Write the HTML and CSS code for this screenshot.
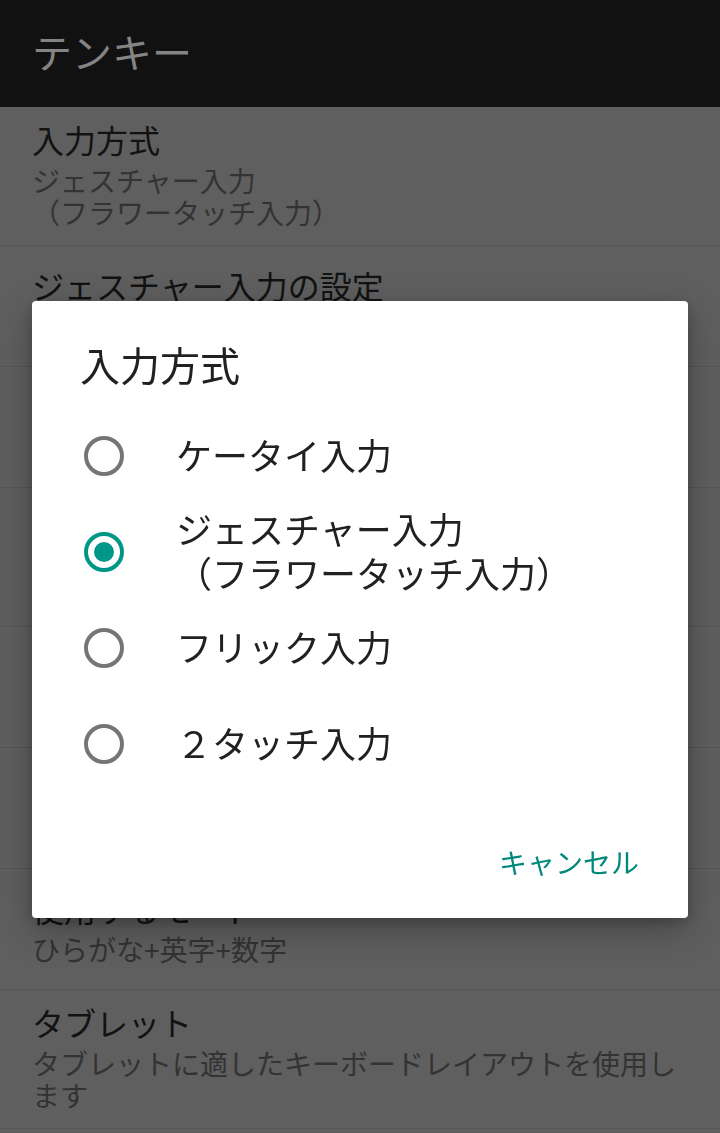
FILE: index.html
```html
<!DOCTYPE html>
<html lang="ja">
<head>
<meta charset="utf-8">
<title>テンキー</title>
<link rel="stylesheet" href="styles.css">
</head>
<body>
<header class="appbar">
  <h1 class="appbar-title">テンキー</h1>
</header>
<main class="prefs">
  <div class="pref">
    <div class="pref-title">入力方式</div>
    <div class="pref-summary">ジェスチャー入力<br>（フラワータッチ入力）</div>
  </div>
  <div class="pref">
    <div class="pref-title">ジェスチャー入力の設定</div>
    <div class="pref-summary">ガイド表示や感度を設定します</div>
  </div>
  <div class="pref">
    <div class="pref-title">キー操作音</div>
    <div class="pref-summary">キーを押したときに音を鳴らす</div>
  </div>
  <div class="pref">
    <div class="pref-title">キー操作バイブ</div>
    <div class="pref-summary">キーを押したときに端末を振動させ<br>る</div>
  </div>
  <div class="pref">
    <div class="pref-title">キーポップアップ</div>
    <div class="pref-summary">押したキーを拡大表示する</div>
  </div>
  <div class="pref">
    <div class="pref-title">トグル入力</div>
    <div class="pref-summary">同じキーで文字を切り替える</div>
  </div>
  <div class="pref">
    <div class="pref-title">使用するモード</div>
    <div class="pref-summary">ひらがな+英字+数字</div>
  </div>
  <div class="pref">
    <div class="pref-title">タブレット</div>
    <div class="pref-summary">タブレットに適したキーボードレイアウトを使用します</div>
  </div>
</main>

<div class="dialog" role="dialog" aria-labelledby="dlg-title">
  <h2 class="dialog-title" id="dlg-title">入力方式</h2>
  <ul class="options" role="radiogroup">
    <li class="option" role="radio" aria-checked="false">
      <span class="radio"></span>
      <span class="option-label">ケータイ入力</span>
    </li>
    <li class="option" role="radio" aria-checked="true">
      <span class="radio checked"></span>
      <span class="option-label">ジェスチャー入力<br>（フラワータッチ入力）</span>
    </li>
    <li class="option" role="radio" aria-checked="false">
      <span class="radio"></span>
      <span class="option-label">フリック入力</span>
    </li>
    <li class="option" role="radio" aria-checked="false">
      <span class="radio"></span>
      <span class="option-label">２タッチ入力</span>
    </li>
  </ul>
  <div class="actions">
    <button class="btn" type="button">キャンセル</button>
  </div>
</div>
</body>
</html>
```

FILE: styles.css
```css
html, body {
  margin: 0;
  padding: 0;
}

body {
  width: 720px;
  height: 1133px;
  overflow: hidden;
  background: #5f5f5f;
  font-family: "Noto Sans CJK JP", "Noto Sans", sans-serif;
}

.appbar {
  height: 107px;
  box-sizing: border-box;
  background: #111111;
  display: flex;
  align-items: center;
  padding: 0 0 6px 32px;
}

.appbar-title {
  margin: 0;
  font-size: 40px;
  line-height: 48px;
  font-weight: 400;
  color: #848484;
}

.prefs {
  display: flex;
  flex-direction: column;
}

.pref {
  min-height: 121px;
  box-sizing: border-box;
  padding: 12px 32px 17px;
  display: flex;
  flex-direction: column;
  justify-content: center;
  border-bottom: 1px solid #555555;
}

.pref-title {
  font-size: 32px;
  line-height: 40px;
  color: #121212;
}

.pref-summary {
  margin-top: 5px;
  font-size: 28px;
  line-height: 32px;
  color: #333333;
}

.dialog {
  position: fixed;
  left: 32px;
  top: 301px;
  width: 656px;
  background: #ffffff;
  border-radius: 4px;
  box-shadow: 0 12px 36px rgba(0, 0, 0, 0.28), 0 4px 12px rgba(0, 0, 0, 0.18);
}

.dialog-title {
  margin: 0;
  padding: 39px 48px 0;
  font-size: 40px;
  line-height: 48px;
  font-weight: 400;
  color: #212121;
}

.options {
  list-style: none;
  margin: 0;
  padding: 20px 0 0;
}

.option {
  display: flex;
  align-items: center;
  gap: 52px;
  min-height: 96px;
  padding: 0 48px 0 52px;
}

.option-label {
  font-size: 36px;
  line-height: 44px;
  color: #212121;
  position: relative;
  top: -2px;
}

.radio {
  position: relative;
  flex: none;
  width: 40px;
  height: 40px;
  box-sizing: border-box;
  border: 4px solid #757575;
  border-radius: 50%;
}

.radio.checked {
  border-color: #009688;
}

.radio.checked::after {
  content: "";
  position: absolute;
  inset: 6px;
  border-radius: 50%;
  background: #009688;
}

.actions {
  display: flex;
  justify-content: flex-end;
  padding: 34px 17px 20px;
}

.btn {
  height: 72px;
  padding: 0 32px;
  border: 0;
  background: none;
  font-family: inherit;
  font-size: 28px;
  color: #00897b;
}
```
